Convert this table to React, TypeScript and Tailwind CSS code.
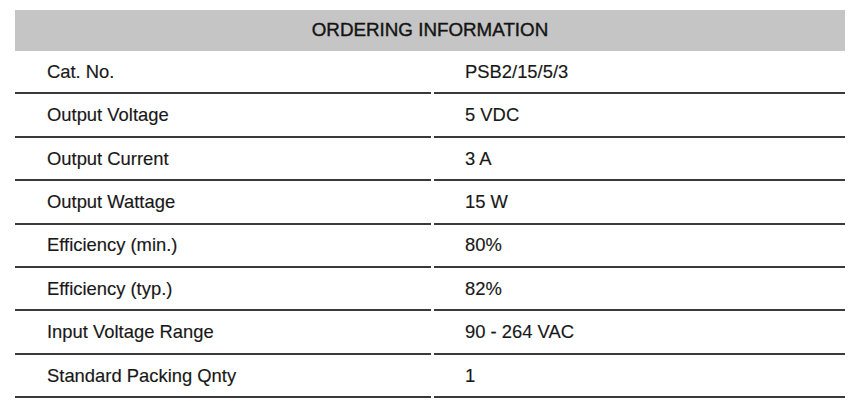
export default function App() {
  const rows: [string, string][] = [
    ["Cat. No.", "PSB2/15/5/3"],
    ["Output Voltage", "5 VDC"],
    ["Output Current", "3 A"],
    ["Output Wattage", "15 W"],
    ["Efficiency (min.)", "80%"],
    ["Efficiency (typ.)", "82%"],
    ["Input Voltage Range", "90 - 264 VAC"],
    ["Standard Packing Qnty", "1"],
  ];
  return (
    <div
      className="w-[862px] h-[416px] bg-white overflow-hidden pt-[10px] pl-[15px] text-[#181818]"
      style={{ fontFamily: '"Liberation Sans", Arial, sans-serif' }}
    >
      <div className="w-[830px]">
        <div className="h-[41px] bg-[#c4c5c4] flex items-center justify-center text-[18.8px] text-[#141414] [-webkit-text-stroke:0.4px_#141414]">
          ORDERING INFORMATION
        </div>
        {rows.map(([k, v]) => (
          <div key={k} className="flex gap-[3.5px] h-[43.4px] text-[18.4px] [-webkit-text-stroke:0.15px_#181818]">
            <div className="w-[415.5px] border-b-2 border-[#3a3a3a] flex items-center pl-[32px]">
              {k}
            </div>
            <div className="flex-1 border-b-2 border-[#3a3a3a] flex items-center pl-[31px]">
              {v}
            </div>
          </div>
        ))}
      </div>
    </div>
  );
}
